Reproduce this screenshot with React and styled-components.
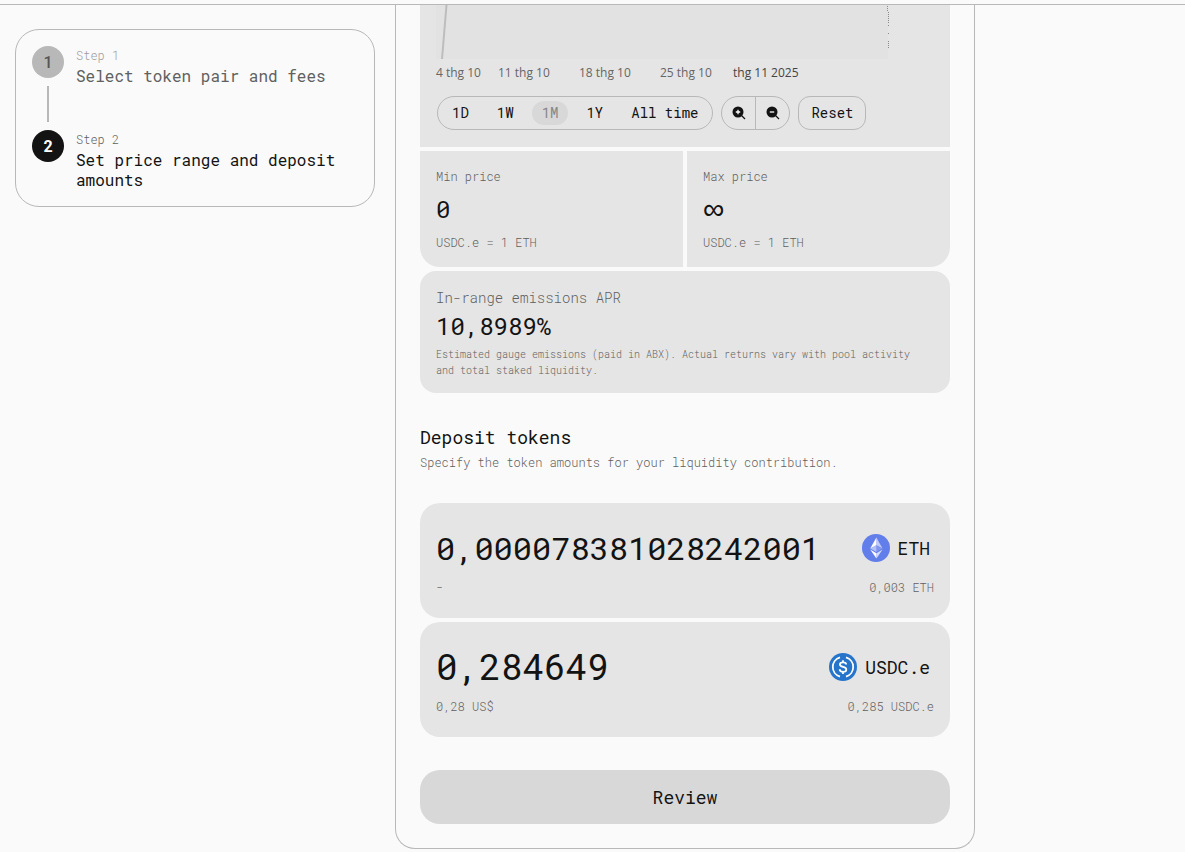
import React from "react";
import styled, { createGlobalStyle } from "styled-components";

const ink = "#131313";
const muted = "#5f5f5f";
const line = "#b8b8b8";
const panel = "#e5e5e5";
const mono = `"Roboto Mono", "Liberation Mono", monospace`;

const GlobalStyle = createGlobalStyle`
  *, *::before, *::after { box-sizing: border-box; }
  body { margin: 0; background: #fafafa; color: ${ink}; font-family: ${mono}; }
  h2, p, ol, dl { margin: 0; padding: 0; }
  button, input { font-family: inherit; color: inherit; }
`;

const Header = styled.header`
  height: 5px;
  border-bottom: 1px solid ${line};
`;

const Page = styled.div`
  display: flex;
  align-items: flex-start;
  gap: 20px;
  padding: 0 15px;
`;

const Steps = styled.ol`
  flex: 0 1 360px;
  margin-top: 24px;
  padding: 16px;
  list-style: none;
  border: 1px solid ${line};
  border-radius: 24px;
`;

const Step = styled.li`
  display: flex;
  gap: 12px;
`;

const StepRail = styled.div`
  flex: none;
  display: flex;
  flex-direction: column;
  align-items: center;
`;

const StepBadge = styled.span`
  width: 32px;
  height: 32px;
  display: grid;
  place-items: center;
  border-radius: 50%;
  background: ${(p) => (p.$active ? ink : "#b8b8b8")};
  color: ${(p) => (p.$active ? "#fff" : "#555")};
  font: ${(p) => (p.$active ? 700 : 500)} 16px Roboto, sans-serif;
`;

const StepLine = styled.span`
  width: 2px;
  height: 36px;
  margin: 8px 0;
  background: #b8b8b8;
`;

const StepLabel = styled.p`
  margin-bottom: 2px;
  font-size: 12px;
  font-weight: 300;
  line-height: 18px;
  color: ${(p) => (p.$active ? muted : "#9c9c9c")};
`;

const StepTitle = styled.p`
  font-size: 16px;
  line-height: 20px;
  color: ${(p) => (p.$active ? ink : "#606060")};
`;

const Card = styled.main`
  flex: 0 1 580px;
  min-width: 0;
  padding: 0 24px 24px;
  border: 1px solid ${line};
  border-top: 0;
  border-radius: 0 0 20px 20px;
`;

const Stack = styled.div`
  display: grid;
  grid-template-columns: minmax(0, 1fr);
  gap: 4px;
`;

const ChartPanel = styled.section`
  padding-bottom: 17px;
  background: ${panel};
`;

const Plot = styled.svg`
  display: block;
  width: 470px;
  max-width: 100%;
  height: 54px;
`;

const Axis = styled.div`
  display: grid;
  grid-template-columns: 62px 81px 81px 73px auto;
  padding: 0 16px;
  margin-bottom: 9px;
  font: 12px/28px "Open Sans", sans-serif;
  color: #666;
`;

const AxisMonth = styled.span`
  color: #444;
`;

const Controls = styled.div`
  display: flex;
  gap: 8px;
  padding: 0 17px;
`;

const Pill = styled.div`
  height: 34px;
  display: flex;
  align-items: center;
  gap: ${(p) => p.$gap || 0}px;
  padding: 0 ${(p) => p.$pad || 0}px;
  border: 1px solid ${line};
  border-radius: 17px;
`;

const RangeButton = styled.button`
  height: 24px;
  padding: 0 10px 2px;
  border: 0;
  border-radius: 12px;
  white-space: nowrap;
  background: ${(p) => (p.$on ? "#d8d8d8" : "transparent")};
  color: ${(p) => (p.$on ? "#888" : ink)};
  font-size: 14px;
`;

const ZoomButton = styled.button`
  width: 33px;
  height: 32px;
  display: grid;
  place-items: center;
  padding: 0;
  border: 0;
  background: transparent;
  & + & {
    width: 34px;
    border-left: 1px solid ${line};
  }
`;

const ResetButton = styled.button`
  height: 34px;
  padding: 0 12px 2px;
  border: 1px solid ${line};
  border-radius: 12px;
  background: transparent;
  font-size: 14px;
`;

const PriceGrid = styled.div`
  display: grid;
  grid-template-columns: 1fr 1fr;
  gap: 4px;
`;

const PriceCard = styled.section`
  padding: 16px;
  background: ${panel};
  border-radius: ${(p) => (p.$end ? "0 0 20px 0" : "0 0 0 20px")};
`;

const Caption = styled.label`
  display: block;
  font-size: 12px;
  font-weight: 300;
  line-height: 18px;
  color: ${muted};
`;

const PriceInput = styled.input`
  display: block;
  width: 100%;
  height: 34px;
  margin: 8px 0 6px;
  padding: 0 0 2px;
  border: 0;
  outline: 0;
  background: transparent;
  font-family: ${(p) => (p.$symbol ? `"Liberation Sans", sans-serif` : mono)};
  font-size: ${(p) => (p.$symbol ? 30 : 24)}px;
`;

const AprCard = styled.section`
  padding: 16px 16px 14px;
  background: ${panel};
  border-radius: 16px;
`;

const AprLabel = styled.p`
  font-size: 14px;
  font-weight: 300;
  line-height: 22px;
  color: ${muted};
`;

const AprValue = styled.p`
  font-size: 24px;
  line-height: 34px;
`;

const AprNote = styled.p`
  margin-top: 4px;
  font-size: 10px;
  font-weight: 300;
  line-height: 16px;
  color: ${muted};
`;

const SectionTitle = styled.h2`
  margin: 31px 0 1px;
  font-size: 18px;
  font-weight: 400;
  line-height: 26px;
`;

const SectionNote = styled.p`
  margin-bottom: 30px;
  font-size: 12px;
  font-weight: 300;
  line-height: 22px;
  color: ${muted};
`;

const TokenCard = styled.section`
  padding: 20px 16px 21px;
  background: ${panel};
  border-radius: 20px;
`;

const TokenRow = styled.div`
  display: flex;
  align-items: center;
  justify-content: space-between;
  gap: 8px;
  height: 50px;
`;

const TokenMeta = styled.div`
  display: flex;
  justify-content: space-between;
  margin-top: 4px;
  font-size: 12px;
  font-weight: 300;
  line-height: 20px;
  color: ${muted};
`;

const AmountInput = styled.input`
  flex: 1;
  min-width: 0;
  height: 50px;
  padding: 0 0 2px;
  border: 0;
  outline: 0;
  background: transparent;
  font-size: ${(p) => p.$size}px;
`;

const Token = styled.span`
  display: flex;
  align-items: center;
  gap: 8px;
  padding-right: 4px;
  font-size: 18px;
`;

const ReviewButton = styled.button`
  display: block;
  width: 100%;
  height: 54px;
  margin-top: 33px;
  border: 0;
  border-radius: 20px;
  background: #d8d8d8;
  font-size: 18px;
`;

function ZoomIcon({ plus }) {
  return (
    <svg width="16" height="16" viewBox="0 0 16 16" aria-hidden="true">
      <circle cx="7" cy="7" r="5.5" fill={ink} />
      <path d="M10.5 10.5 14 14" stroke={ink} strokeWidth="1.3" />
      <path d={plus ? "M4.8 7h4.4M7 4.8v4.4" : "M4.8 7h4.4"} stroke="#fff" strokeWidth="1.3" />
    </svg>
  );
}

function EthIcon() {
  return (
    <svg width="28" height="28" viewBox="0 0 28 28" aria-hidden="true">
      <circle cx="14" cy="14" r="14" fill="#627eea" />
      <path d="M14.4 3.5v7.8l6.1 3.1z" fill="#c0cbf7" />
      <path d="M14.4 3.5 8.2 14.4l6.2-3.1z" fill="#fff" />
      <path d="M14.4 19.2v5.3l6.2-8.9z" fill="#d3dafa" />
      <path d="M14.4 24.5v-5.3l-6.2-3.6z" fill="#fff" />
      <path d="m14.4 18 6.1-3.6-6.1-3.1z" fill="#8197ee" />
      <path d="m8.2 14.4 6.2 3.6v-6.7z" fill="#b3c0f5" />
    </svg>
  );
}

function UsdcIcon() {
  return (
    <svg width="28" height="28" viewBox="0 0 28 28" aria-hidden="true">
      <circle cx="14" cy="14" r="14" fill="#2775ca" />
      <g fill="none" stroke="#fff" strokeWidth="1.8">
        <path d="M11 4.4a10 10 0 0 0 0 19.2M17 4.4a10 10 0 0 1 0 19.2" />
        <path d="M17.2 11.6c0-1.5-1.2-2.3-3.2-2.3s-3.1.9-3.1 2.2c0 3.2 6.4 1.6 6.4 4.9 0 1.5-1.3 2.4-3.3 2.4s-3.3-.9-3.3-2.5M14 7.2v2.2M14 18.7v2.2" />
      </g>
    </svg>
  );
}

function PriceField({ id, label, value, end }) {
  return (
    <PriceCard $end={end}>
      <Caption htmlFor={id}>{label}</Caption>
      <PriceInput id={id} defaultValue={value} $symbol={value === "∞"} />
      <Caption as="p">USDC.e = 1 ETH</Caption>
    </PriceCard>
  );
}

function TokenField({ name, icon, amount, size, fiat, balance }) {
  return (
    <TokenCard>
      <TokenRow>
        <AmountInput aria-label={`${name} amount`} defaultValue={amount} $size={size} />
        <Token>{icon}{name}</Token>
      </TokenRow>
      <TokenMeta><span>{fiat}</span><span>{balance}</span></TokenMeta>
    </TokenCard>
  );
}

export default function App() {
  return (
    <>
      <GlobalStyle />
      <Header />
      <Page>
        <Steps>
          <Step>
            <StepRail><StepBadge>1</StepBadge><StepLine /></StepRail>
            <div><StepLabel>Step 1</StepLabel><StepTitle>Select token pair and fees</StepTitle></div>
          </Step>
          <Step>
            <StepRail><StepBadge $active>2</StepBadge></StepRail>
            <div><StepLabel $active>Step 2</StepLabel><StepTitle $active>Set price range and deposit amounts</StepTitle></div>
          </Step>
        </Steps>
        <Card>
          <Stack>
            <ChartPanel>
              <Plot viewBox="0 0 470 54" aria-hidden="true">
                <rect x="16" width="452" height="54" fill="#e2e2e2" />
                <path d="M26.5 0 22 54" stroke="#bdbdbd" strokeWidth="2" fill="none" />
                <path d="M467.5 1v5M468.5 7v12M468.5 20v2M468.5 28v2M468.5 36v7" stroke="#8a8a8a" strokeDasharray="1 1" />
              </Plot>
              <Axis>
                <span>4 thg 10</span><span>11 thg 10</span><span>18 thg 10</span><span>25 thg 10</span>
                <AxisMonth>thg 11 2025</AxisMonth>
              </Axis>
              <Controls>
                <Pill $gap={8} $pad={4}>
                  {["1D", "1W", "1M", "1Y", "All time"].map((r) => (
                    <RangeButton key={r} type="button" $on={r === "1M"}>{r}</RangeButton>
                  ))}
                </Pill>
                <Pill>
                  <ZoomButton type="button" aria-label="Zoom in"><ZoomIcon plus /></ZoomButton>
                  <ZoomButton type="button" aria-label="Zoom out"><ZoomIcon /></ZoomButton>
                </Pill>
                <ResetButton type="button">Reset</ResetButton>
              </Controls>
            </ChartPanel>
            <PriceGrid>
              <PriceField id="min-price" label="Min price" value="0" />
              <PriceField id="max-price" label="Max price" value="∞" end />
            </PriceGrid>
            <AprCard>
              <AprLabel>In-range emissions APR</AprLabel>
              <AprValue>10,8989%</AprValue>
              <AprNote>Estimated gauge emissions (paid in ABX). Actual returns vary with pool activity and total staked liquidity.</AprNote>
            </AprCard>
          </Stack>
          <SectionTitle>Deposit tokens</SectionTitle>
          <SectionNote>Specify the token amounts for your liquidity contribution.</SectionNote>
          <Stack>
            <TokenField name="ETH" icon={<EthIcon />} amount="0,000078381028242001" size={32} fiat="-" balance="0,003 ETH" />
            <TokenField name="USDC.e" icon={<UsdcIcon />} amount="0,284649" size={36} fiat="0,28 US$" balance="0,285 USDC.e" />
          </Stack>
          <ReviewButton type="button">Review</ReviewButton>
        </Card>
      </Page>
    </>
  );
}
